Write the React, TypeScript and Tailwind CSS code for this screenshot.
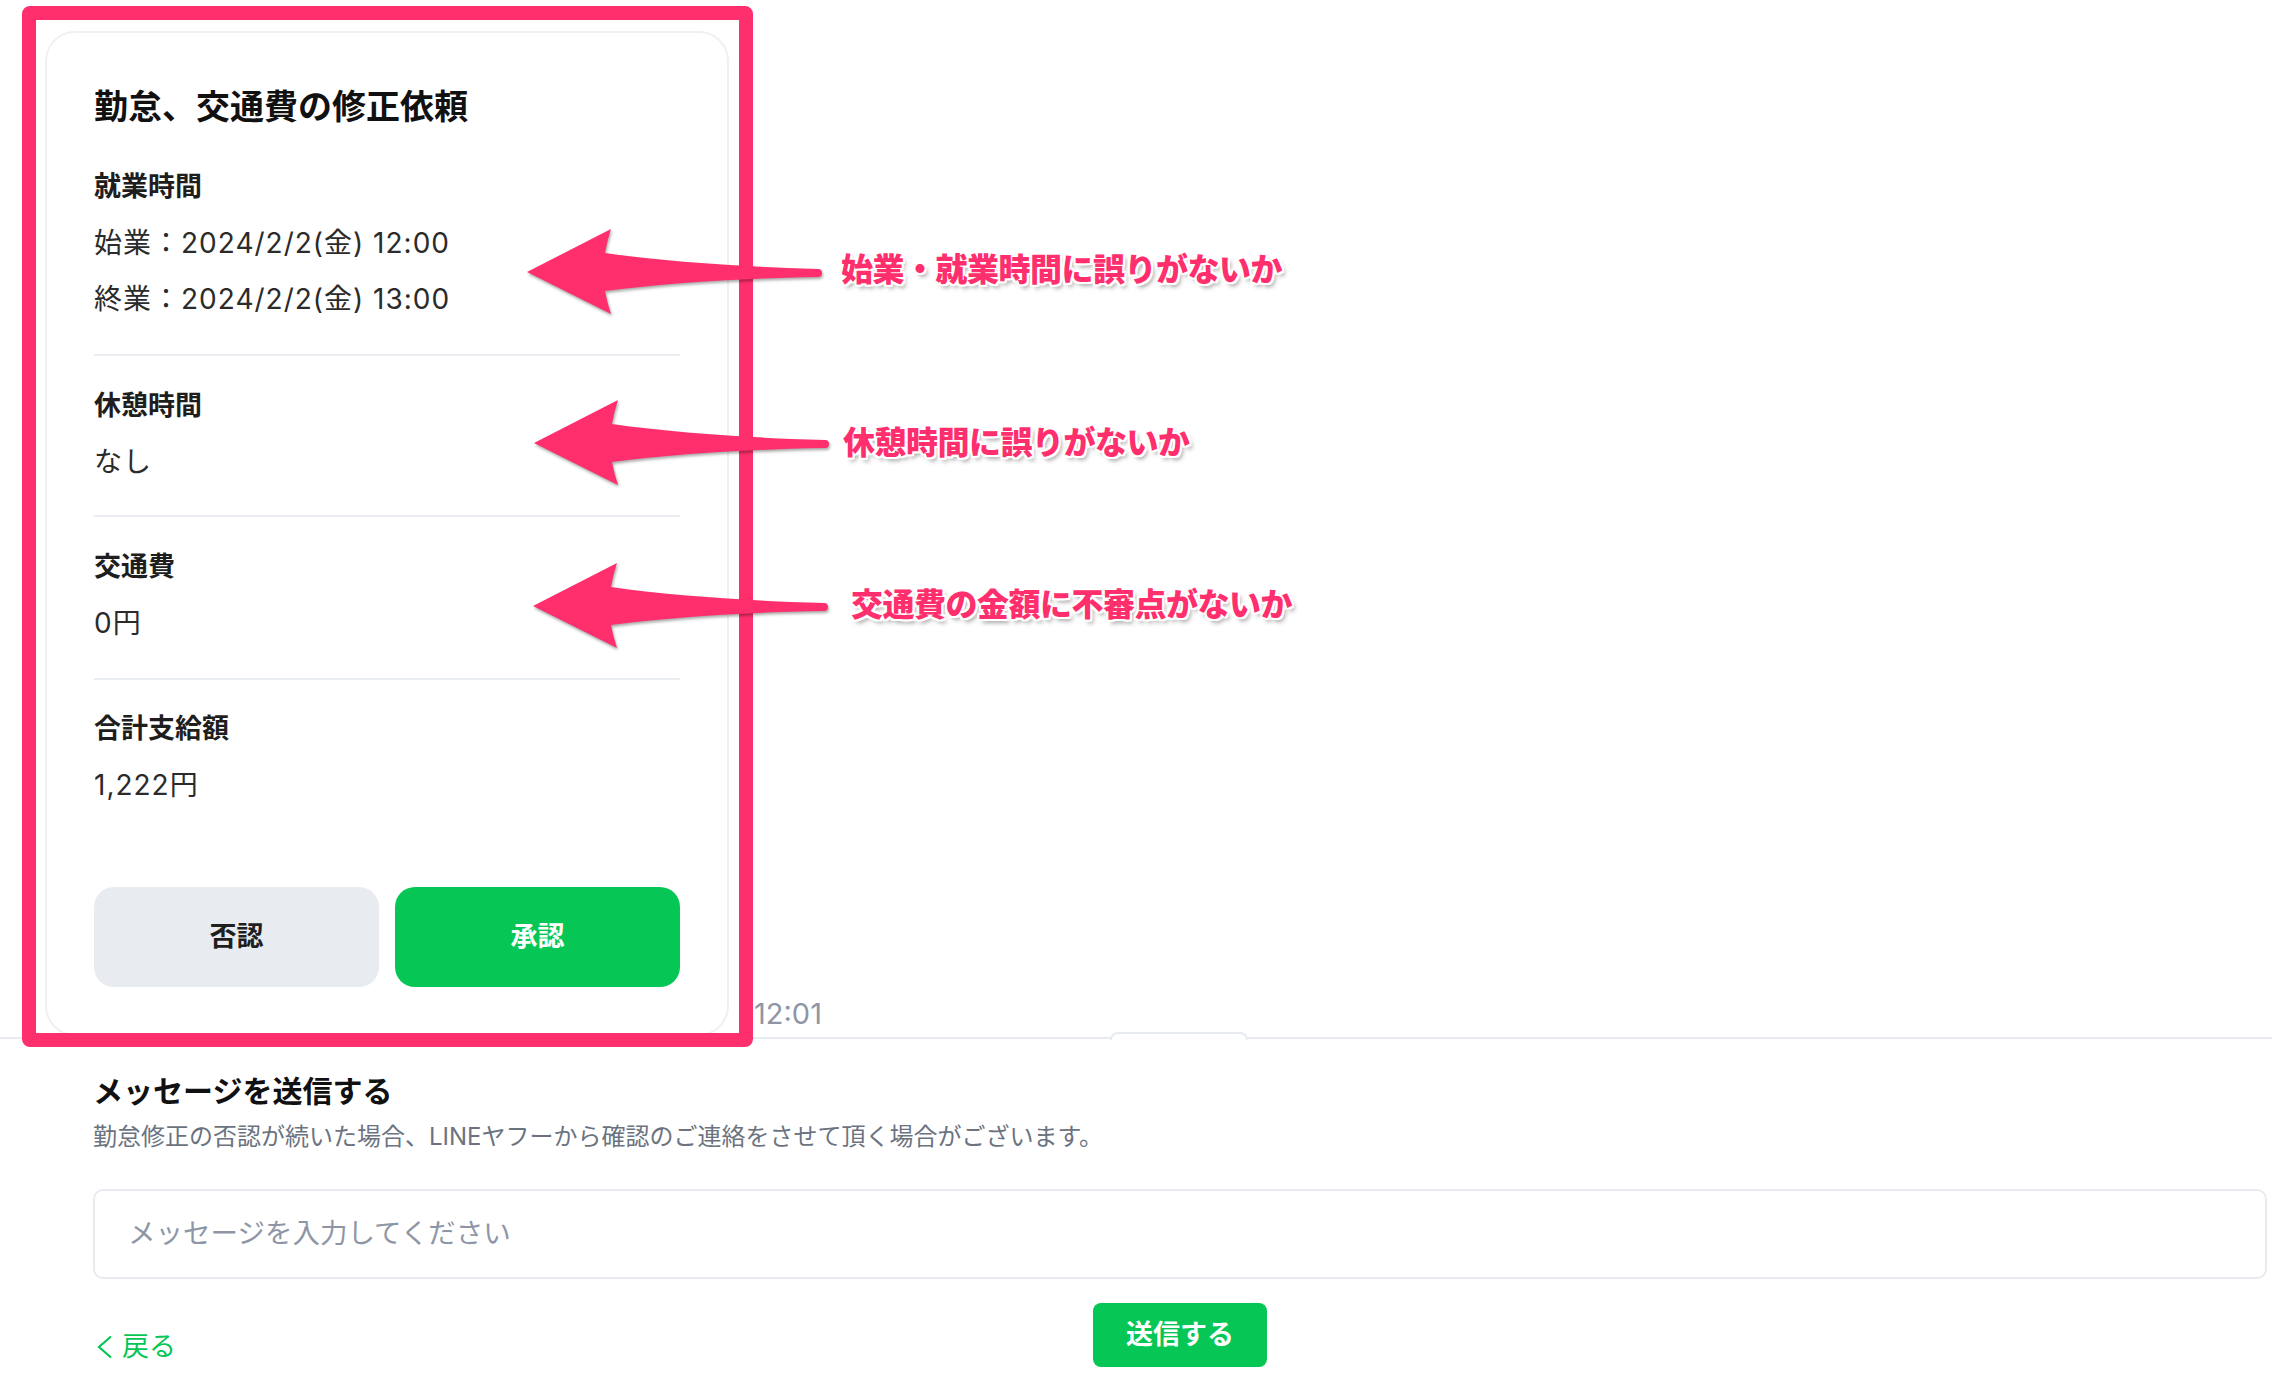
import React from 'react';

const sections = [
  { label: '就業時間', values: ['始業：2024/2/2(金) 12:00', '終業：2024/2/2(金) 13:00'], pt: 'pt-[38px]', pb: 'pb-[35px]' },
  { label: '休憩時間', values: ['なし'], pt: 'pt-[30px]', pb: 'pb-[33px]' },
  { label: '交通費', values: ['0円'], pt: 'pt-[30px]', pb: 'pb-[35px]' },
  { label: '合計支給額', values: ['1,222円'], pt: 'pt-[29px]', pb: '' },
];

// pink annotation arrow, tip at the left middle of the box
function Arrow({ className }: { className: string }) {
  return (
    <svg
      className={`absolute h-[86px] w-[296px] drop-shadow-[1px_2px_1.5px_rgba(0,0,0,0.35)] ${className}`}
      viewBox="0 0 296 86"
    >
      <path
        d="M0 43 L84 0 Q80 12 78 24 C140 33 220 38 291 40 A4 4 0 0 1 291 48 C220 49 140 54 78 62 Q80 73 84 85 Z"
        fill="#ff2f6d"
      />
    </svg>
  );
}

const noteText =
  'absolute whitespace-nowrap font-["Noto_Sans_CJK_JP",sans-serif] text-[32px] leading-[40px] font-black tracking-[-0.5px] text-[#ff2f6d] [text-shadow:2px_0_0_#fff,-2px_0_0_#fff,0_2px_0_#fff,0_-2px_0_#fff,2px_2px_0_#fff,-2px_-2px_0_#fff,2px_-2px_0_#fff,-2px_2px_0_#fff,3px_4px_4px_rgba(0,0,0,0.35)]';

export default function App() {
  return (
    <div className="relative h-[1386px] w-full overflow-hidden bg-white font-[Inter,'Noto_Sans_CJK_JP',sans-serif] text-[#1f1f1f]">
      {/* chat area */}
      <div className="relative h-[1037px] pl-[45px] pt-[31px]">
        <div className="flex items-end gap-[25px]">
          <div className="w-[684px] rounded-[30px] border-2 border-[#eef0f3] bg-white px-[47px] pt-[52px] pb-[47px]">
            <h1 className="text-[34px] leading-[44px] font-bold text-[#111]">勤怠、交通費の修正依頼</h1>
            {sections.map((s, i) => (
              <div
                key={s.label}
                className={`${s.pt} ${s.pb} ${i < sections.length - 1 ? 'border-b-2 border-[#e9edf1]' : ''}`}
              >
                <div className="text-[27px] leading-[40px] font-bold text-[#1e1e1e]">{s.label}</div>
                <div className="mt-[16px] flex flex-col gap-[16px]">
                  {s.values.map((v) => (
                    <div key={v} className="text-[28px] leading-[40px] tracking-[1px] text-[#2b2b2b]">{v}</div>
                  ))}
                </div>
              </div>
            ))}
            <div className="mt-[82px] grid grid-cols-2 gap-[16px]">
              <button className="h-[100px] rounded-[20px] bg-[#e8ecf0] text-[27px] font-bold text-[#1f1f1f]">否認</button>
              <button className="h-[100px] rounded-[20px] bg-[#06c755] text-[27px] font-bold text-white">承認</button>
            </div>
          </div>
          <span className="mb-[5px] text-[29px] leading-[34px] text-[#8e96a6]">12:01</span>
        </div>
        <div className="absolute left-[1110px] top-[1032px] h-[8px] w-[138px] rounded-t-[12px] border-2 border-b-0 border-[#e8ecf0] bg-white" />
      </div>

      {/* message footer */}
      <div className="border-t-2 border-[#e8ecf0] pt-[32px] pl-[93px] pr-[5px]">
        <h2 className="text-[30px] leading-[40px] font-bold text-[#111]">メッセージを送信する</h2>
        <p className="mt-[9px] text-[24px] leading-[34px] text-[#6b7380]">
          勤怠修正の否認が続いた場合、LINEヤフーから確認のご連絡をさせて頂く場合がございます。
        </p>
        <div className="mt-[35px] flex h-[90px] items-center rounded-[10px] border-2 border-[#e8ecf0] pl-[33px] text-[27.5px] text-[#8e96a6]">
          メッセージを入力してください
        </div>
        <div className="mt-[24px] grid grid-cols-[1fr_auto_1fr] items-end">
          <button className="flex items-center gap-[9px] justify-self-start pl-[4px] text-[27px] leading-[40px] text-[#06c755]">
            <svg width="16" height="24" viewBox="0 0 16 24" fill="none">
              <path d="M14 1.5 L2 12 L14 22.5" stroke="#06c755" strokeWidth="2.2" />
            </svg>
            戻る
          </button>
          <button className="h-[64px] w-[174px] rounded-[8px] bg-[#06c755] text-[27px] font-bold text-white">送信する</button>
          <div />
        </div>
      </div>

      {/* annotations */}
      <div className="pointer-events-none absolute left-[22px] top-[6px] h-[1041px] w-[731px] rounded-[8px] border-[14px] border-[#ff2f6d]" />
      <Arrow className="left-[527px] top-[229px]" />
      <Arrow className="left-[534px] top-[400px]" />
      <Arrow className="left-[533px] top-[563px]" />
      <div className={`${noteText} left-[841px] top-[247px]`}>始業・就業時間に誤りがないか</div>
      <div className={`${noteText} left-[843px] top-[420px]`}>休憩時間に誤りがないか</div>
      <div className={`${noteText} left-[851px] top-[582px]`}>交通費の金額に不審点がないか</div>
    </div>
  );
}
